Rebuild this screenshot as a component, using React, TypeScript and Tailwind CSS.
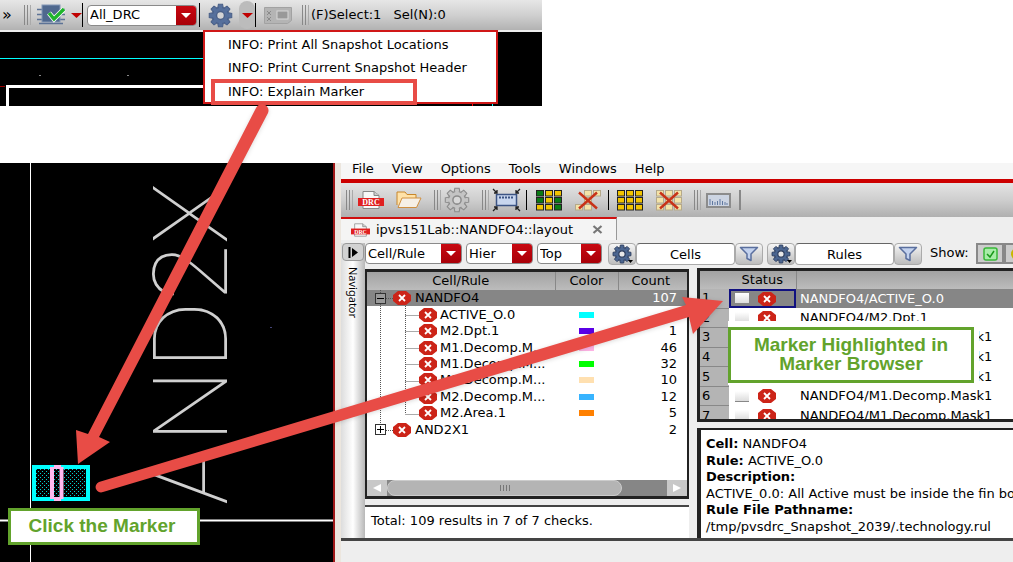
import React from "react";

const ruleRows = [
  { name: "ACTIVE_O.0", color: "bg-[#00ffff]", count: "" },
  { name: "M2.Dpt.1", color: "bg-[#5a00e6]", count: "1" },
  { name: "M1.Decomp.M...", color: "bg-[#ffb4e6]", count: "46" },
  { name: "M1.Decomp.M...", color: "bg-[#00ff00]", count: "32" },
  { name: "M1.Decomp.M...", color: "bg-[#ffe0b0]", count: "10" },
  { name: "M2.Decomp.M...", color: "bg-[#38b4ff]", count: "12" },
  { name: "M2.Area.1", color: "bg-[#ff8000]", count: "5" },
];

const markerRows = [
  "NANDFO4/ACTIVE_O.0",
  "NANDFO4/M2.Dpt.1",
  "NANDFO4/M1.Decomp.Mask1",
  "NANDFO4/M1.Decomp.Mask1",
  "NANDFO4/M1.Decomp.Mask1",
  "NANDFO4/M1.Decomp.Mask1",
  "NANDFO4/M1.Decomp.Mask1",
];

function ErrorIcon() {
  return (
    <svg width="18" height="14" viewBox="0 0 18 14" className="shrink-0" aria-hidden="true">
      <path d="M5 0h8l5 4v6l-5 4H5l-5-4V4z" fill="#cc2418" />
      <path d="M6 4l6 6M12 4l-6 6" stroke="#fff" strokeWidth="1.8" />
    </svg>
  );
}

function Gear({ size, fill, hole, stroke }: { size: number; fill: string; hole: string; stroke: string }) {
  const teeth = [0, 45, 90, 135, 180, 225, 270, 315];
  return (
    <svg width={size} height={size} viewBox="0 0 24 24" aria-hidden="true">
      {teeth.map((a) => (
        <path key={a} d="M9.2 5.5L10 1.2h4l.8 4.3z" fill={fill} stroke={stroke} transform={`rotate(${a} 12 12)`} />
      ))}
      <circle cx="12" cy="12" r="7.8" fill={fill} stroke={stroke} />
      {teeth.map((a) => (
        <path key={a} d="M10.2 6.5L10.6 2.5h2.800l.4 4z" fill={fill} transform={`rotate(${a} 12 12)`} />
      ))}
      <circle cx="12" cy="12" r="3.8" fill={hole} stroke={stroke} strokeWidth="1.4" />
    </svg>
  );
}

function FilterGear() {
  return (
    <span className="flex items-end">
      <Gear size={20} fill="#4c6690" hole="#e8e8e8" stroke="#2c3c5c" />
      <svg width="5" height="4" viewBox="0 0 5 4" className="-ml-1" aria-hidden="true"><path d="M0 0h5L2.500 3z" /></svg>
    </span>
  );
}

function Funnel() {
  return (
    <svg width="20" height="16" viewBox="0 0 20 16" aria-hidden="true">
      <path d="M1.500 1.500h17l-6.500 6.500v6.500l-4-2V8z" fill="#c3d2ee" stroke="#5a6f9e" strokeWidth="1.500" strokeLinejoin="round" />
    </svg>
  );
}

function DrcIcon({ small }: { small?: boolean }) {
  return (
    <svg width={small ? 19 : 26} height={small ? 14 : 18} viewBox="0 0 26 18" aria-hidden="true">
      <path d="M5 .5h11l5 4v13H5z" fill="#f8f8f8" stroke="#888" />
      <path d="M16 .5v4h5" fill="#ccc" stroke="#888" />
      <rect y="7" width="26" height="8" fill="#e02020" />
      <text x="13" y="14" textAnchor="middle" fontSize="8" fontWeight="700" fontFamily="Liberation Serif, serif" fill="#fff">DRC</text>
    </svg>
  );
}

function Handle() {
  return (
    <span className="flex h-5 shrink-0 gap-0.5" aria-hidden="true">
      <span className="w-px bg-[#888]" />
      <span className="w-px bg-[#888]" />
      <span className="w-px bg-[#aaa]" />
    </span>
  );
}

function GridIcon({ colors, crossed }: { colors: string[]; crossed?: boolean }) {
  return (
    <svg width="26" height="21" viewBox="0 0 26 21" aria-hidden="true">
      {colors.map((c, i) =>
        c === "" ? null : (
          <rect
            key={i}
            x={(i % 3) * 9 + 0.5}
            y={Math.floor(i / 3) * 7 + 0.5}
            width="7"
            height="5.500"
            fill={c}
            stroke={crossed ? "#b5a98a" : "#222"}
          />
        ),
      )}
      {crossed && <path d="M4 2.500l18 16M22 2.500L4 18.500" stroke="#c83218" strokeWidth="2.400" />}
    </svg>
  );
}

function Drop({ label, options, className }: { label: string; options: string[]; className: string }) {
  return (
    <label className={`relative flex h-[21px] shrink-0 overflow-hidden rounded border border-[#8a8a8a] bg-white ${className}`}>
      <select aria-label={label} className="w-full appearance-none bg-transparent pl-0.5 leading-4 outline-none">
        {options.map((o) => (
          <option key={o}>{o}</option>
        ))}
      </select>
      <span className="pointer-events-none absolute inset-y-0 right-0 flex w-5 items-center justify-center bg-gradient-to-b from-[#c80810] to-[#a80008]">
        <svg width="10" height="5" viewBox="0 0 10 5" aria-hidden="true">
          <path d="M0 0h10L5 5z" fill="#fff" />
        </svg>
      </span>
    </label>
  );
}

function ToolButton({ label, className = "", children }: { label: string; className?: string; children: React.ReactNode }) {
  return (
    <button aria-label={label} className={`flex shrink-0 items-center justify-center ${className}`}>
      {children}
    </button>
  );
}

const boxed = "h-[22px] w-7 rounded border border-[#aaa] bg-gradient-to-b from-[#f6f6f6] to-[#bdbdbd]";
const Y = "#f2c400";
const G = "#0a7a14";
const P = "#f3e3a8";

function EditorToolbar() {
  return (
    <div className="flex h-[30px] items-center bg-gradient-to-b from-[#e6e6e6] via-[#d0d0d0] to-[#b2b2b2]">
      <button className="w-6 pl-0.5 text-left text-base leading-4">»</button>
      <Handle />
      <ToolButton label="Run checks" className="ml-1.5">
        <svg width="30" height="22" viewBox="0 0 30 22" aria-hidden="true">
          <path d="M0 5.500h28M0 10.500h28M0 15.500h28M2 19.500h24" stroke="#5d7396" strokeWidth="1.300" />
          <rect x="5" y="1" width="18" height="17" fill="#4f688e" stroke="#8296b5" />
          <path d="M12 9l5 6L27 5" fill="none" stroke="#fff" strokeWidth="5" />
          <path d="M12 9l5 6L27 5" fill="none" stroke="#1fb52c" strokeWidth="3.500" />
        </svg>
      </ToolButton>
      <ToolButton label="Check options" className="ml-1">
        <svg width="11" height="5" viewBox="0 0 11 5" aria-hidden="true"><path d="M0 0h11L5.500 5z" fill="#c00000" /></svg>
      </ToolButton>
      <span className="mr-1 h-6 w-px bg-black" />
      <Drop label="Rule set" options={["All_DRC"]} className="w-[110px]" />
      <span className="ml-0.5 h-6 w-px bg-black" />
      <ToolButton label="Settings" className="ml-2"><Gear size={25} fill="#56709c" hole="#d4d4d4" stroke="#4a6088" /></ToolButton>
      <ToolButton label="Snapshot menu" className="ml-1.5 h-7 w-4 rounded-lg bg-[#bcbcbc]">
        <svg width="11" height="5" viewBox="0 0 11 5" aria-hidden="true"><path d="M0 0h11L5.500 5z" fill="#c00000" /></svg>
      </ToolButton>
      <span className="h-6 w-px bg-black" />
      <ToolButton label="Form" className="ml-2">
        <svg width="28" height="17" viewBox="0 0 28 17" aria-hidden="true">
          <path d="M.5.500h27v13l-4 3H.5z" fill="#b4b4b4" stroke="#a2a2a2" />
          <path d="M3 4l4 4M7 4L3 8M3 10l4 4M7 10l-4 4" stroke="#8a8a8a" />
          <rect x="13" y="4" width="11" height="8" fill="#999" stroke="#d8d8d8" />
        </svg>
      </ToolButton>
      <span className="ml-2.5"><Handle /></span>
      <span className="ml-0.5">(F)Select:1</span>
      <span className="ml-3">Sel(N):0</span>
    </div>
  );
}

function LayoutEditor() {
  return (
    <section className="relative w-[542px] max-w-full">
      <EditorToolbar />
      <div className="h-0.5 bg-[#eee]" />
      <svg className="block h-[74px] w-full bg-black" aria-hidden="true">
        <path d="M0 26.500H204" stroke="#00ffff" />
        <path d="M0 54.500H5" stroke="#900" />
        <path d="M7.500 74V54.500H204" fill="none" stroke="#fff" strokeWidth="3" />
        <path d="M39 43.500h2M127 43.500h2" stroke="#888" />
        <path d="M472.500 72v2" stroke="#f00" />
        <path d="M492.500 72v2" stroke="#0ff" />
      </svg>
      <ul role="menu" className="absolute left-[203px] top-[30px] h-[74px] w-[295px] border-2 border-[#d01818] bg-white pl-1.5 pt-px">
        {["INFO: Print All Snapshot Locations", "INFO: Print Current Snapshot Header", "INFO: Explain Marker"].map((t, i) => (
          <li key={t} role="none">
            <button
              role="menuitem"
              className={`flex items-center whitespace-nowrap text-left ${i === 2 ? "h-[26px] w-[206px] border-4 border-[#e84c46] pl-[13px]" : "h-[23px] pl-[17px]"}`}
            >
              {t}
            </button>
          </li>
        ))}
      </ul>
    </section>
  );
}

function LayoutCanvas() {
  return (
    <section className="relative w-[335px] shrink-0 overflow-hidden border-r-2 border-[#a01818] bg-black">
      <svg className="absolute inset-0 h-full w-full" aria-hidden="true">
        <path d="M30.500 0V400" stroke="#fff" />
        <path d="M0 357.500H335" stroke="#fff" strokeWidth="2" />
        <path d="M270 164.500h2" stroke="#447" />
      </svg>
      <div className="absolute left-[142px] top-[11px] flex h-[340px] w-[100px] rotate-180 items-center justify-center font-[Roboto,sans-serif] text-[104px] font-thin leading-none text-[#d0d0d0] [writing-mode:vertical-rl]">
        AND2X
      </div>
      <svg className="absolute left-8 top-[302px]" width="58" height="36" aria-hidden="true">
        <defs>
          <pattern id="dots" width="4" height="4" patternUnits="userSpaceOnUse">
            <path d="M0 .5h1M2 2.500h1" stroke="#00d0d0" />
          </pattern>
        </defs>
        <rect x="2" y="2" width="54" height="32" fill="#000" />
        <rect x="2" y="2" width="54" height="32" fill="url(#dots)" stroke="#00ffff" strokeWidth="4" />
        <path d="M20 2v32M29.500 2v32" stroke="#ffb8ee" strokeWidth="4" />
        <path d="M22 2h7M22 34h7" stroke="#ffb8ee" strokeWidth="4" />
      </svg>
    </section>
  );
}

function MenuBar() {
  return (
    <nav className="flex h-4 items-start gap-[18px] bg-[#f6f6f6] pl-[11px]">
      {["File", "View", "Options", "Tools", "Windows", "Help"].map((m) => (
        <button key={m} className="leading-3">{m}</button>
      ))}
    </nav>
  );
}

function BrowserToolbar() {
  return (
    <div className="flex h-[38px] items-center border-t-4 border-[#cc0000] bg-gradient-to-b from-[#e4e4e4] via-[#cecece] to-[#b0b0b0] pl-[5px]">
      <Handle />
      <ToolButton label="Open DRC run" className="ml-[5px]"><DrcIcon /></ToolButton>
      <ToolButton label="Open folder" className="ml-3">
        <svg width="26" height="18" viewBox="0 0 26 18" aria-hidden="true">
          <path d="M1 14V1h8l2 2.500h9V7" fill="#ffe2a8" stroke="#c8862a" />
          <path d="M2 16.500L6 7h19l-4.500 9.500z" fill="#f6f0e6" stroke="#d09040" />
        </svg>
      </ToolButton>
      <span className="ml-3"><Handle /></span>
      <ToolButton label="Options" className="ml-[3px]"><Gear size={26} fill="#c4c4c4" hole="#d8d8d8" stroke="#8c8c8c" /></ToolButton>
      <span className="ml-3"><Handle /></span>
      <ToolButton label="Fit view" className="ml-[3px]">
        <svg width="29" height="24" viewBox="0 0 29 24" aria-hidden="true">
          <rect x="4.500" y="6.500" width="20" height="11" fill="#c8d6ee" stroke="#3c5484" strokeWidth="1.500" />
          <path d="M7 9.500h15" stroke="#3c5484" strokeWidth="2" strokeDasharray="2 1" />
          <path d="M1 1l4 4M5 2v3H2M28 1l-4 4M24 2v3h3M1 23l4-4M2 19h3v3M28 23l-4-4M27 19h-3v3" fill="none" stroke="#222" strokeWidth="1.300" />
        </svg>
      </ToolButton>
      <span className="ml-[5px] h-5 w-px bg-black" />
      <ToolButton label="Color all" className="ml-[9px]"><GridIcon colors={[G, Y, Y, G, Y, G, Y, Y, G]} /></ToolButton>
      <ToolButton label="Clear colors" className="ml-[13px]"><GridIcon colors={["", P, P, "", P, "", P, P, ""]} crossed /></ToolButton>
      <span className="ml-[7px] h-5 w-px bg-black" />
      <ToolButton label="Select all" className="ml-2"><GridIcon colors={[Y, Y, Y, Y, Y, Y, Y, Y, Y]} /></ToolButton>
      <ToolButton label="Deselect all" className="ml-[13px]"><GridIcon colors={[P, P, P, P, P, P, P, P, P]} crossed /></ToolButton>
      <span className="ml-3"><Handle /></span>
      <ToolButton label="Histogram" className="ml-[5px]">
        <svg width="25" height="15" viewBox="0 0 25 15" aria-hidden="true">
          <rect x="1" y="1" width="23" height="13" fill="#ccd4e2" stroke="#8c8c8c" strokeWidth="2" />
          <path d="M4 12V6M6.500 12V8M9 12V9M11.500 12V8M14 12V6M16.500 12V8M19 12V9M21 12V10" stroke="#6078a0" />
        </svg>
      </ToolButton>
      <span className="ml-2 h-5 w-0.5 bg-[#888]" />
    </div>
  );
}

function RuleTree() {
  return (
    <div className="relative border-2 border-t-[3px] border-b-[3px] border-[#222] bg-white">
      <table className="h-[166px] w-full table-fixed border-collapse">
        <colgroup>
          <col />
          <col className="w-[63px]" />
          <col className="w-[69px]" />
        </colgroup>
        <thead>
          <tr className="h-[18px] bg-gradient-to-b from-[#a2a2a2] to-[#bcbcbc]">
            <th className="border-r border-[#888] p-0 font-normal leading-4">Cell/Rule</th>
            <th className="border-r border-[#888] p-0 font-normal leading-4">Color</th>
            <th className="p-0 pr-1 font-normal leading-4">Count</th>
          </tr>
        </thead>
        <tbody>
          <tr className="bg-[#868686]">
            <td className="p-0">
              <div className="flex items-center pl-2">
                <button aria-label="Collapse NANDFO4" className="relative z-10 mr-[7px] flex h-[11px] w-[11px] items-center justify-center border border-[#333] bg-[#999]">
                  <span className="h-px w-[7px] bg-black" />
                </button>
                <ErrorIcon />
                <span className="pl-1 leading-4">NANDFO4</span>
              </div>
            </td>
            <td className="p-0" />
            <td className="p-0 pr-[10px] text-right leading-4 text-white">107</td>
          </tr>
          {ruleRows.map((r, i) => (
            <tr key={i}>
              <td className="p-0">
                <div className="flex items-center pl-[52px]">
                  <ErrorIcon />
                  <span className="whitespace-nowrap pl-[3px] leading-4">{r.name}</span>
                </div>
              </td>
              <td className="p-0"><div className={`mx-auto h-1.5 w-[15px] ${r.color}`} /></td>
              <td className="p-0 pr-[10px] text-right leading-4">{r.count}</td>
            </tr>
          ))}
          <tr>
            <td className="p-0">
              <div className="flex items-center pl-2">
                <button aria-label="Expand AND2X1" className="relative z-10 mr-[7px] flex h-[11px] w-[11px] items-center justify-center border border-[#333] bg-white">
                  <svg width="7" height="7" aria-hidden="true"><path d="M0 3.500h7M3.500 0v7" stroke="#000" /></svg>
                </button>
                <ErrorIcon />
                <span className="pl-1 leading-4">AND2X1</span>
              </div>
            </td>
            <td className="p-0" />
            <td className="p-0 pr-[10px] text-right leading-4">2</td>
          </tr>
        </tbody>
      </table>
      <svg className="pointer-events-none absolute left-0 top-0" width="52" height="166" aria-hidden="true">
        <path
          d="M13.500 18v140M38.500 34v108M38.500 43.500h13M38.500 59.500h13M38.500 76.500h13M38.500 92.500h13M38.500 109.500h13M38.500 125.500h13M38.500 142.500h13M19 26.500h7M19 158.500h7"
          stroke="#555"
          strokeDasharray="1 1"
          fill="none"
        />
      </svg>
      <div className="mt-[42px] flex h-4 items-stretch bg-[#868686]">
        <button aria-label="Scroll left" className="flex w-5 items-center justify-center bg-[#c8c8c8]">
          <svg width="8" height="8" aria-hidden="true"><path d="M8 0v8L0 4z" fill="#fff" /></svg>
        </button>
        <div className="flex flex-1">
          <div className="flex w-[84%] items-center justify-center gap-0.5 rounded-full border border-[#ccc] bg-[#b4b4b4]">
            {[0, 1, 2, 3].map((n) => (
              <span key={n} className="h-1.5 w-px bg-[#777]" />
            ))}
          </div>
        </div>
        <button aria-label="Scroll right" className="flex w-5 items-center justify-center bg-[#c8c8c8]">
          <svg width="8" height="8" aria-hidden="true"><path d="M0 0v8l8-4z" fill="#fff" /></svg>
        </button>
      </div>
    </div>
  );
}

function MarkerTable() {
  return (
    <div className="h-[154px] overflow-hidden border-[3px] border-r-0 border-[#222] bg-white">
      <table className="h-[155px] w-full table-fixed border-collapse">
        <colgroup>
          <col className="w-[29px]" />
          <col className="w-[67px]" />
          <col />
        </colgroup>
        <thead>
          <tr className="h-[18px] bg-gradient-to-b from-[#a2a2a2] to-[#bcbcbc]">
            <th className="p-0" />
            <th className="border-r border-[#888] p-0 font-normal leading-4">Status</th>
            <th className="p-0" />
          </tr>
        </thead>
        <tbody>
          {markerRows.map((m, i) => (
            <tr key={i} className={i === 0 ? "bg-[#868686] text-white" : ""}>
              <th className="border-b border-[#888] bg-[#b4b4b4] p-0 pl-0.5 text-left font-normal leading-4 text-black">{i + 1}</th>
              <td className={`p-0 ${i === 0 ? "outline-2 -outline-offset-2 outline-[#101080]" : ""}`}>
                <div className="flex items-center gap-[9px] pl-1.5">
                  <input
                    type="checkbox"
                    aria-label={`Select marker ${i + 1}`}
                    className="h-[11px] w-[14px] appearance-none border-b border-[#888] bg-gradient-to-b from-white to-[#ddd]"
                  />
                  <ErrorIcon />
                </div>
              </td>
              <td className="whitespace-nowrap p-0 pl-1 leading-4">{m}</td>
            </tr>
          ))}
        </tbody>
      </table>
    </div>
  );
}

function Details() {
  return (
    <div className="flex h-[110px] flex-col justify-between overflow-hidden border-l-4 border-t-2 border-[#222] bg-white pb-[3px] pl-[5px] pt-1.5">
      <p className="whitespace-nowrap leading-4"><b>Cell:</b> NANDFO4</p>
      <p className="whitespace-nowrap leading-4"><b>Rule:</b> ACTIVE_O.0</p>
      <p className="whitespace-nowrap leading-4"><b>Description:</b></p>
      <p className="whitespace-nowrap leading-4">ACTIVE_0.0: All Active must be inside the fin boundary</p>
      <p className="whitespace-nowrap leading-4"><b>Rule File Pathname:</b></p>
      <p className="whitespace-nowrap leading-4">/tmp/pvsdrc_Snapshot_2039/.technology.rul</p>
    </div>
  );
}

function FilterBar() {
  const inputClass = "h-[22px] w-[99px] shrink-0 rounded-sm border border-[#aaa] border-t-[#666] bg-white text-center outline-none";
  return (
    <div className="flex h-[25px] items-start">
      <Drop label="Group by" options={["Cell/Rule"]} className="w-[97px]" />
      <Drop label="Hierarchy" options={["Hier"]} className="ml-1 w-[67px]" />
      <Drop label="Level" options={["Top"]} className="ml-1 w-[65px]" />
      <ToolButton label="Cell filter settings" className={`ml-1.5 ${boxed}`}><FilterGear /></ToolButton>
      <input aria-label="Cells filter" defaultValue="Cells" className={inputClass} />
      <ToolButton label="Filter cells" className={boxed}><Funnel /></ToolButton>
      <ToolButton label="Rule filter settings" className={`ml-1 ${boxed}`}><FilterGear /></ToolButton>
      <input aria-label="Rules filter" defaultValue="Rules" className={inputClass} />
      <ToolButton label="Filter rules" className={boxed}><Funnel /></ToolButton>
      <span className="ml-2 w-[44px] shrink-0 leading-[20px]">Show:</span>
      <ToolButton label="Show passed" className="ml-0.5 h-[21px] w-7 border-2 border-[#888] bg-[#ccc]">
        <svg width="15" height="14" viewBox="0 0 15 14" aria-hidden="true">
          <rect x="1" y="1" width="13" height="12" rx="2" fill="#a8eca8" stroke="#38b838" strokeWidth="1.500" />
          <path d="M4 7l3 3 4-6" fill="none" stroke="#189818" strokeWidth="1.500" />
        </svg>
      </ToolButton>
      <ToolButton label="Show waived" className="h-[21px] w-7 border-2 border-[#888] bg-[#ccc]">
        <svg width="15" height="14" viewBox="0 0 15 14" aria-hidden="true">
          <circle cx="6.500" cy="7" r="5.500" fill="#f4f0a0" stroke="#c8b800" strokeWidth="2" />
        </svg>
      </ToolButton>
    </div>
  );
}

function MarkerBrowser() {
  return (
    <section className="flex min-w-0 flex-1 flex-col border-l-[6px] border-[#ece6de] bg-[#eeeeee]">
      <MenuBar />
      <BrowserToolbar />
      <div className="flex h-[26px] items-start">
        <div className="flex h-[23px] w-[276px] items-center border-r border-t-2 border-[#999] border-t-[#d01010] bg-[#f4f4f4] pl-[10px]">
          <DrcIcon small />
          <span className="whitespace-nowrap pl-1.5">ipvs151Lab::NANDFO4::layout</span>
          <button aria-label="Close tab" className="ml-auto mr-[13px]">
            <svg width="11" height="9" viewBox="0 0 11 9" aria-hidden="true"><path d="M1.500 1l8 7M9.500 1l-8 7" stroke="#777" strokeWidth="2.200" /></svg>
          </button>
        </div>
      </div>
      <div className="flex">
        <aside className="flex w-6 shrink-0 flex-col items-center bg-gradient-to-r from-[#ddd] via-white to-[#b8b8b8]">
          <button aria-label="Show navigator" className="flex h-[18px] w-[22px] items-center justify-center rounded border border-[#999] bg-[#d2d2d2]">
            <svg width="11" height="11" aria-hidden="true">
              <path d="M1.500 0v11" stroke="#000" strokeWidth="2" />
              <path d="M4 1l6 4.500L4 10z" />
            </svg>
          </button>
          <span className="mt-1.5 font-[Noto_Sans,sans-serif] text-[11px] leading-4 [writing-mode:vertical-rl]">Navigator</span>
        </aside>
        <div className="min-w-0 flex-1">
          <FilterBar />
          <div className="flex">
            <div className="flex w-[324px] shrink-0 flex-col pt-px">
              <RuleTree />
              <div className="mt-1.5 flex-1 border-t-2 border-[#444] bg-white pl-1.5 leading-[28px]">Total: 109 results in 7 of 7 checks.</div>
            </div>
            <div className="ml-2 flex min-w-0 flex-1 flex-col gap-1.5">
              <MarkerTable />
              <Details />
            </div>
          </div>
        </div>
      </div>
      <div className="flex-1 border-t-[3px] border-[#444] bg-[#eeeeee]" />
    </section>
  );
}

function Arrows() {
  return (
    <svg className="pointer-events-none absolute left-0 top-0 drop-shadow-sm" width="740" height="500" aria-hidden="true">
      <g fill="#e84c46">
        <path d="M256 108a6.500 6.500 0 0 1 12 5L99 437l11 5-32 22-2-34 12 4z" />
        <path d="M99 482L686 305l-4-8 41 4-30 33-4-17L103 492a5.200 5.200 0 0 1-4-10z" />
      </g>
    </svg>
  );
}

export default function App() {
  return (
    <main className="relative flex min-h-screen flex-col overflow-hidden bg-white font-[DejaVu_Sans,sans-serif] text-[13px] leading-4 text-black">
      <LayoutEditor />
      <div className="mt-[57px] flex flex-1">
        <LayoutCanvas />
        <MarkerBrowser />
      </div>
      <div className="absolute left-[728px] top-[321px] bg-white pb-0.5 pr-[5px] pt-1.5 font-[Liberation_Sans,sans-serif]">
        <p className="w-[246px] border-[3px] border-[#62a32c] bg-white pb-[7px] pt-[5px] text-center text-[19px] font-bold leading-[19px] text-[#62a32c]">
          Marker Highlighted in
          <br />
          Marker Browser
        </p>
      </div>
      <p className="absolute left-2 top-[508px] w-[192px] border-[3px] border-[#62a32c] bg-white pb-[7px] pt-[5px] pr-1 text-center font-[Liberation_Sans,sans-serif] text-[19px] font-bold leading-[19px] text-[#62a32c]">
        Click the Marker
      </p>
      <Arrows />
    </main>
  );
}
